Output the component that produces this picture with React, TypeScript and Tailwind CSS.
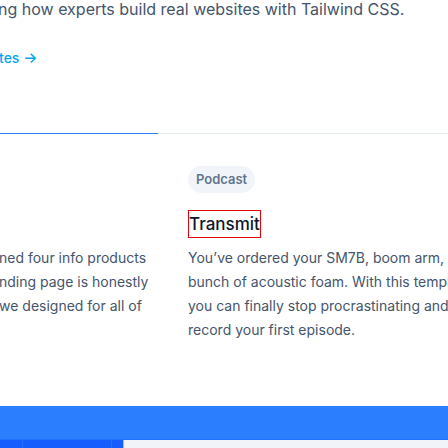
import React from "react";

export default function App() {
  return (
    <div className="relative w-[448px] h-[448px] overflow-hidden bg-white font-[family-name:Inter,sans-serif]">
      <div className="-ml-[2px]">
        <p className="-mt-[3px] whitespace-nowrap text-[16px] leading-[24px] text-slate-600">
          ng how experts build real websites with Tailwind CSS.
        </p>
        <a className="mt-[27px] ml-[1px] block whitespace-nowrap text-sm leading-5 font-medium text-sky-500">
          tes <span className="text-[15px]">→</span>
        </a>
      </div>
      <div className="mt-[65px] flex h-px">
        <div className="w-[158px] bg-blue-500" />
        <div className="flex-1 bg-slate-200" />
      </div>
      <div className="flex">
        <div className="w-[190px] shrink-0 pt-[112px] -ml-[1px] text-sm leading-6 text-slate-600 whitespace-nowrap">
          <div>ned four info products</div>
          <div>nding page is honestly</div>
          <div>we designed for all of</div>
        </div>
        <div className="-ml-[1px] flex flex-col items-start pt-[32px]">
          <span className="flex h-[27px] items-center rounded-full bg-slate-100 px-[8px] text-[13px] font-semibold text-slate-500">
            Podcast
          </span>
          <h3 className="mt-[17px] border border-red-600 text-[17px] leading-[26px] font-medium text-slate-900">
            Transmit
          </h3>
          <div className="mt-[8px] text-sm leading-6 text-slate-600 whitespace-nowrap">
            <div>You’ve ordered your SM7B, boom arm,</div>
            <div>bunch of acoustic foam. With this template</div>
            <div>you can finally stop procrastinating and</div>
            <div>record your first episode.</div>
          </div>
        </div>
      </div>
      <div className="mt-[64px] h-[34px] bg-blue-500 border-b border-blue-600/40" />
      <div className="flex h-[8px]">
        <div className="flex w-[123px] bg-blue-600">
          <div className="w-[23px] border-r border-blue-500/60" />
          <div className="w-[89px] border-r border-blue-500/60" />
        </div>
        <div className="w-px bg-blue-300" />
        <div className="flex-1 bg-slate-100" />
      </div>
    </div>
  );
}
